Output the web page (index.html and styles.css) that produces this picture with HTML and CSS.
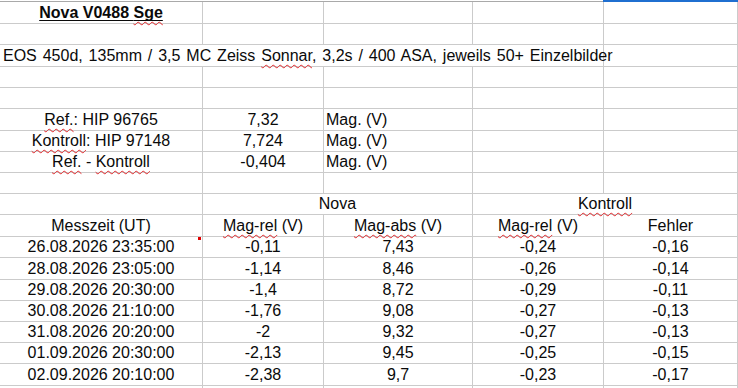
FILE: index.html
```html
<!DOCTYPE html>
<html lang="de">
<head>
<meta charset="utf-8">
<title>Nova V0488 Sge</title>
<link rel="stylesheet" href="styles.css">
</head>
<body>
<div class="sheet">
  <div class="colhead"><div class="ch-gray"></div><div class="ch-sel"></div></div>
  <div class="grid">
    <!-- row 1 -->
    <div class="c"><span class="title">Nova V0488 <span class="sp">Sge</span></span></div>
    <div class="c"></div><div class="c"></div><div class="c"></div><div class="c"></div>
    <!-- row 2 -->
    <div class="c"></div><div class="c"></div><div class="c"></div><div class="c"></div><div class="c"></div>
    <!-- row 3 -->
    <div class="c span4 left over"><span class="long">EOS 450d, 135mm / 3,5 MC Zeiss <span class="sp">Sonnar</span>, 3,2s / 400 ASA, jeweils 50+ Einzelbilder</span></div>
    <div class="c"></div>
    <!-- row 4 -->
    <div class="c"></div><div class="c"></div><div class="c"></div><div class="c"></div><div class="c"></div>
    <!-- row 5 -->
    <div class="c"></div><div class="c"></div><div class="c"></div><div class="c"></div><div class="c"></div>
    <!-- row 6 -->
    <div class="c"><span><span class="sp">Ref.</span>: HIP 96765</span></div>
    <div class="c">7,32</div><div class="c left">Mag. (V)</div><div class="c"></div><div class="c"></div>
    <!-- row 7 -->
    <div class="c"><span><span class="sp">Kontroll</span>: HIP 97148</span></div>
    <div class="c">7,724</div><div class="c left">Mag. (V)</div><div class="c"></div><div class="c"></div>
    <!-- row 8 -->
    <div class="c"><span><span class="sp">Ref.</span> - <span class="sp">Kontroll</span></span></div>
    <div class="c">-0,404</div><div class="c left">Mag. (V)</div><div class="c"></div><div class="c"></div>
    <!-- row 9 -->
    <div class="c"></div><div class="c"></div><div class="c"></div><div class="c"></div><div class="c"></div>
    <!-- row 10 -->
    <div class="c"></div>
    <div class="c span2">Nova</div>
    <div class="c span2"><span class="sp">Kontroll</span></div>
    <!-- row 11 -->
    <div class="c">Messzeit (UT)</div>
    <div class="c"><span><span class="sp">Mag-rel</span> (V)</span></div>
    <div class="c"><span><span class="sp">Mag-abs</span> (V)</span></div>
    <div class="c"><span><span class="sp">Mag-rel</span> (V)</span></div>
    <div class="c">Fehler</div>
    <!-- data -->
    <div class="c">26.08.2026 23:35:00<i class="marker"></i></div>
    <div class="c">-0,11</div><div class="c">7,43</div><div class="c">-0,24</div><div class="c">-0,16</div>
    <div class="c">28.08.2026 23:05:00</div>
    <div class="c">-1,14</div><div class="c">8,46</div><div class="c">-0,26</div><div class="c">-0,14</div>
    <div class="c">29.08.2026 20:30:00</div>
    <div class="c">-1,4</div><div class="c">8,72</div><div class="c">-0,29</div><div class="c">-0,11</div>
    <div class="c">30.08.2026 21:10:00</div>
    <div class="c">-1,76</div><div class="c">9,08</div><div class="c">-0,27</div><div class="c">-0,13</div>
    <div class="c">31.08.2026 20:20:00</div>
    <div class="c">-2</div><div class="c">9,32</div><div class="c">-0,27</div><div class="c">-0,13</div>
    <div class="c">01.09.2026 20:30:00</div>
    <div class="c">-2,13</div><div class="c">9,45</div><div class="c">-0,25</div><div class="c">-0,15</div>
    <div class="c">02.09.2026 20:10:00</div>
    <div class="c">-2,38</div><div class="c">9,7</div><div class="c">-0,23</div><div class="c">-0,17</div>
    <!-- row 19 (partial) -->
    <div class="c"></div><div class="c"></div><div class="c"></div><div class="c"></div><div class="c"></div>
  </div>
</div>
</body>
</html>
```

FILE: styles.css
```css
html, body {
  margin: 0;
  padding: 0;
  background: #ffffff;
  overflow: hidden;
}

.sheet {
  width: 738px;
  font-family: "Liberation Sans", Arial, sans-serif;
  font-size: 16px;
  color: #0a0a0a;
}

.colhead {
  display: flex;
  height: 2px;
}

.ch-gray {
  width: 603px;
  border-bottom: 1px solid #a9a9a9;
  box-sizing: border-box;
}

.ch-sel {
  flex: 1;
  background: #1f6fd0;
}

.grid {
  display: grid;
  grid-template-columns: 203px 121px 149px 131px 134px;
  grid-template-rows: 22px 21px 22px 21px 21px 22px 21px 21px 21px 21px 22px 21px 22px 21px 21px 21px 21px 22px 21px;
}

.c {
  box-sizing: border-box;
  border-right: 1px solid #cbcbcb;
  border-bottom: 1px solid #cbcbcb;
  display: flex;
  align-items: flex-end;
  justify-content: center;
  padding: 0 2px 1px;
  line-height: 18px;
  white-space: nowrap;
  position: relative;
}

.left {
  justify-content: flex-start;
}

.span2 {
  grid-column: span 2;
}

.span4 {
  grid-column: span 4;
}

.over {
  overflow: visible;
  padding-left: 3px;
  z-index: 1;
}

.long {
  word-spacing: 1.45px;
}

.title {
  font-weight: bold;
  text-decoration: underline solid #0a0a0a;
  text-decoration-thickness: 1px;
  text-underline-offset: 2px;
}

.sp {
  text-decoration: underline wavy #e0262a;
  text-decoration-thickness: 1px;
  text-underline-offset: 3px;
  text-decoration-skip-ink: none;
}

.marker {
  position: absolute;
  right: 1px;
  top: 0;
  width: 3px;
  height: 3px;
  background: #e00000;
}
```
